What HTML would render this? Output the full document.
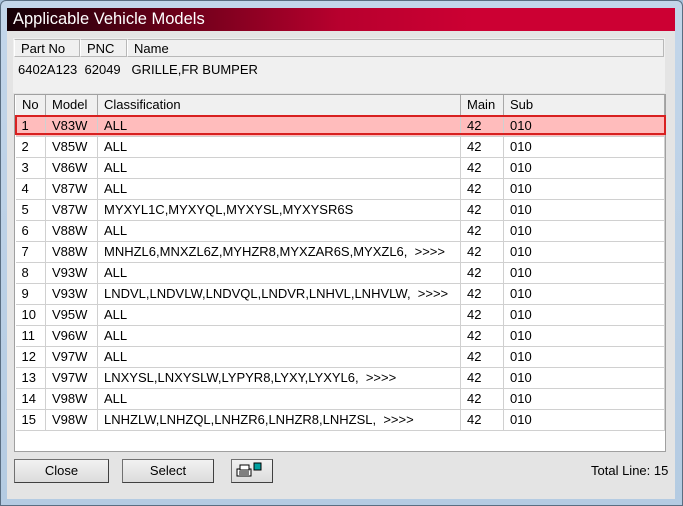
<!DOCTYPE html><html><head><style>
*{margin:0;padding:0;box-sizing:border-box}
body{width:683px;height:506px;background:#a9c3dc;font-family:"Liberation Sans",sans-serif;font-size:13px;color:#000;position:relative;overflow:hidden}
.frame{position:absolute;left:0;top:0;width:683px;height:506px;border:1px solid #5a6e82;border-radius:6px 6px 0 0;background:linear-gradient(#c3d6ea,#b4cbe2)}
.title{position:absolute;left:7px;top:8px;width:668px;height:23px;background:linear-gradient(90deg,#140006 0%,#6a0019 25%,#b8002e 50%,#cc0033 70%,#cc0033 100%);color:#fff;font-size:16.5px;line-height:23px;padding-left:6px}
.body{position:absolute;left:7px;top:31px;width:668px;height:468px;background:#e4e4e4}
.top{position:absolute;left:13px;top:38px;width:652px;height:55px;background:#f0f0f0}
.abs{position:absolute}
.hc{position:absolute;top:39px;height:18px;background:#f0f0f0;border:1px solid #b8b8b8;border-left:1px solid #fff;padding-left:6px;line-height:17px}
.list{position:absolute;left:14px;top:94px;width:652px;height:358px;background:#fff;border:1px solid #a0a0a0}
table{border-collapse:collapse;position:absolute;left:15px;top:95px;width:650px;table-layout:fixed}
td{height:21px;border-right:1px solid #d0d0d0;border-bottom:1px solid #d0d0d0;padding-left:6px;white-space:nowrap;line-height:20px;overflow:hidden}
th{height:20px;font-weight:normal;text-align:left;padding-left:6px;background:#f0f0f0;border-right:1px solid #a8a8a8;border-bottom:1px solid #a8a8a8;border-left:1px solid #fff}
tr.sel td{background:#ffbcbc}
.selbox{position:absolute;left:15px;top:115px;width:651px;height:20px;border:2px solid #d82020}
.btn{position:absolute;top:459px;height:24px;background:linear-gradient(#f2f2f2,#dcdcdc);border:1px solid #707070;border-right-color:#404040;border-bottom-color:#404040;text-align:center;line-height:22px;font-size:13px}
</style></head><body>
<div class="frame"></div>
<div class="title">Applicable Vehicle Models</div>
<div class="body"></div>
<div class="top"></div>
<div class="hc" style="left:14px;width:66px">Part No</div>
<div class="hc" style="left:80px;width:47px">PNC</div>
<div class="hc" style="left:127px;width:537px">Name</div>
<div class="abs" style="left:18px;top:62px">6402A123&nbsp;&nbsp;62049&nbsp;&nbsp;&nbsp;GRILLE,FR BUMPER</div>
<div class="list"></div>
<table>
<tr><th style="width:30px">No</th><th style="width:52px">Model</th><th style="width:363px">Classification</th><th style="width:43px">Main</th><th>Sub</th></tr>
<tr class="sel"><td>1</td><td>V83W</td><td>ALL</td><td>42</td><td>010</td></tr>
<tr><td>2</td><td>V85W</td><td>ALL</td><td>42</td><td>010</td></tr>
<tr><td>3</td><td>V86W</td><td>ALL</td><td>42</td><td>010</td></tr>
<tr><td>4</td><td>V87W</td><td>ALL</td><td>42</td><td>010</td></tr>
<tr><td>5</td><td>V87W</td><td>MYXYL1C,MYXYQL,MYXYSL,MYXYSR6S</td><td>42</td><td>010</td></tr>
<tr><td>6</td><td>V88W</td><td>ALL</td><td>42</td><td>010</td></tr>
<tr><td>7</td><td>V88W</td><td>MNHZL6,MNXZL6Z,MYHZR8,MYXZAR6S,MYXZL6,&nbsp;&nbsp;&gt;&gt;&gt;&gt;</td><td>42</td><td>010</td></tr>
<tr><td>8</td><td>V93W</td><td>ALL</td><td>42</td><td>010</td></tr>
<tr><td>9</td><td>V93W</td><td>LNDVL,LNDVLW,LNDVQL,LNDVR,LNHVL,LNHVLW,&nbsp;&nbsp;&gt;&gt;&gt;&gt;</td><td>42</td><td>010</td></tr>
<tr><td>10</td><td>V95W</td><td>ALL</td><td>42</td><td>010</td></tr>
<tr><td>11</td><td>V96W</td><td>ALL</td><td>42</td><td>010</td></tr>
<tr><td>12</td><td>V97W</td><td>ALL</td><td>42</td><td>010</td></tr>
<tr><td>13</td><td>V97W</td><td>LNXYSL,LNXYSLW,LYPYR8,LYXY,LYXYL6,&nbsp;&nbsp;&gt;&gt;&gt;&gt;</td><td>42</td><td>010</td></tr>
<tr><td>14</td><td>V98W</td><td>ALL</td><td>42</td><td>010</td></tr>
<tr><td>15</td><td>V98W</td><td>LNHZLW,LNHZQL,LNHZR6,LNHZR8,LNHZSL,&nbsp;&nbsp;&gt;&gt;&gt;&gt;</td><td>42</td><td>010</td></tr>
</table>
<div class="selbox"></div>
<div class="btn" style="left:14px;width:95px">Close</div>
<div class="btn" style="left:122px;width:92px">Select</div>
<div class="btn" style="left:231px;width:42px">
<svg width="40" height="22" viewBox="0 0 40 22"><rect x="5" y="9" width="14" height="7" fill="#fff" stroke="#000"/><rect x="8" y="5" width="9" height="5" fill="#fff" stroke="#000"/><line x1="7" y1="12" x2="17" y2="12" stroke="#000"/><line x1="7" y1="14" x2="17" y2="14" stroke="#000"/><rect x="22" y="3" width="7" height="7" fill="#00a0a0" stroke="#000"/></svg></div>
<div class="abs" style="left:591px;top:463px">Total Line: 15</div>
</body></html>
